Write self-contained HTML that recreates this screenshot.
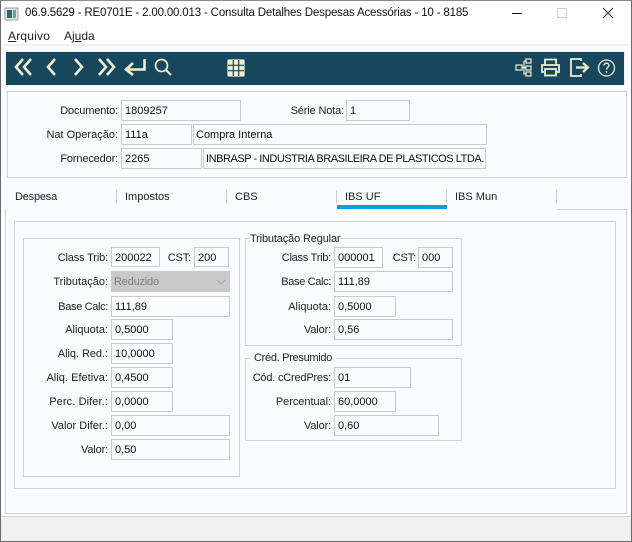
<!DOCTYPE html>
<html><head><meta charset="utf-8">
<style>
html,body{margin:0;padding:0}
body{width:632px;height:542px;overflow:hidden;position:relative;background:#fafbfd;font-family:"Liberation Sans",sans-serif;font-size:11px;color:#111}
div,span.a{position:absolute;box-sizing:border-box}
.f{border:1px solid #cbcbcb;background:#fbfcfd;line-height:21px;padding-left:3px;white-space:nowrap;height:21px;color:#111}
.l{text-align:right;line-height:22px;height:21px;white-space:nowrap;color:#222;letter-spacing:-.15px}
.l1{left:9px;width:109px}
.l2{left:10px;width:98px}
.l3{left:247px;width:84px}
.b{border:1px solid #d2d2d2}
.t{white-space:nowrap;line-height:14px;color:#222}
.s{width:1px;height:13px;top:190px;background:#cfcfcf}
</style></head><body>
<!-- title bar -->
<div style="left:0;top:0;width:632px;height:45px;background:#fff"></div>
<div style="left:0;top:44px;width:632px;height:2px;background:#f0f0f0"></div>
<svg style="position:absolute;left:4px;top:6px" width="16" height="16"><rect x="1" y="2" width="13" height="12" fill="#dfe5e6" stroke="#9aa4a8"/><rect x="3" y="4" width="5" height="8" fill="#2d6c66"/><rect x="9" y="4" width="3" height="8" fill="#7f97a4"/></svg>
<div class="t" style="left:25px;top:6px;font-size:11.5px;color:#111;letter-spacing:-.17px">06.9.5629 - RE0701E - 2.00.00.013 - Consulta Detalhes Despesas Acessórias - 10 - 8185</div>
<div style="left:512px;top:13px;width:10px;height:1px;background:#111"></div>
<div style="left:557px;top:8px;width:10px;height:10px;border:1px solid #ccc"></div>
<svg style="position:absolute;left:602px;top:7px" width="12" height="12"><path d="M1 1L11 11M11 1L1 11" stroke="#222" stroke-width="1" fill="none"/></svg>
<div class="t" style="left:8px;top:29px;font-size:12px;letter-spacing:.2px"><u>A</u>rquivo</div>
<div class="t" style="left:64px;top:29px;font-size:12px"><span>Aj</span><u>u</u>da</div>
<!-- toolbar -->
<div style="left:5px;top:51px;width:620px;height:35px;background:#eef1f5"></div>
<div style="left:6px;top:52px;width:618px;height:33px;background:#17475c"></div>
<svg style="position:absolute;left:0;top:50px" width="632" height="36" fill="none" stroke="#f1edcf" stroke-width="2.6">
<path d="M23 9L16 17L23 25M31 9L24 17L31 25"/>
<path d="M55 9L48 17L55 25"/>
<path d="M75 9L82 17L75 25"/>
<path d="M99 9L106 17L99 25M107 9L114 17L107 25"/>
<path d="M144.500 9V19.500H127M133 13L126 19.500L133 25" stroke-width="2.600"/>
<circle cx="161.500" cy="15.500" r="6" stroke-width="1.700"/><path d="M166 20L171 25" stroke-width="2"/>
<g stroke-width="1.300"><rect x="228" y="10" width="16" height="16" rx="1" fill="#f1edcf" stroke="#f1edcf"/></g>
<path d="M233.300 10V26M238.700 10V26M228 15.300H244M228 20.700H244" stroke="#17475c" stroke-width="1.200"/>
<g stroke-width="1.200"><rect x="516" y="15" width="6" height="5"/><rect x="526" y="9" width="5" height="4"/><rect x="526" y="16" width="5" height="4"/><rect x="526" y="22" width="5" height="4"/><path d="M522 17.500H526M524 11V24H526M524 11H526"/></g>
<g stroke-width="1.800"><path d="M545 15V9.500H556V15"/><path d="M545 22H542V15H559V22H556"/><rect x="545" y="19" width="11" height="6.500"/></g>
<g stroke-width="1.800"><path d="M581 11V9H571V26H581V24"/><path d="M576 17.500H587M583 13L588 17.500L583 22" stroke-width="2.200"/></g>
<circle cx="606.500" cy="18" r="8" stroke-width="1.300"/><path d="M604 15.500C604 12.500 609 12.500 609 15.500C609 17.300 606.500 17.300 606.500 19.500M606.500 21V23" stroke-width="1.400"/>
</svg>
<!-- header panel -->
<div class="b" style="left:7px;top:91px;width:620px;height:87px"></div>
<div class="l l1" style="top:100px">Documento:</div><div class="f" style="left:121px;top:100px;width:120px">1809257</div>
<div class="l" style="left:250px;width:94px;top:100px">Série Nota:</div><div class="f" style="left:346px;top:100px;width:64px">1</div>
<div class="l l1" style="top:124px;letter-spacing:0">Nat Operação:</div><div class="f" style="left:121px;top:124px;width:71px">111a</div><div class="f" style="left:193px;top:124px;width:294px;padding-left:2px">Compra Interna</div>
<div class="l l1" style="top:148px">Fornecedor:</div><div class="f" style="left:121px;top:148px;width:81px">2265</div><div class="f" style="left:203px;top:148px;width:283px;padding-left:2px;letter-spacing:-.46px">INBRASP - INDUSTRIA BRASILEIRA DE PLASTICOS LTDA.</div>
<!-- tabs -->
<div class="t" style="left:15px;top:190px;letter-spacing:-.2px">Despesa</div>
<div class="t" style="left:125px;top:190px">Impostos</div>
<div class="t" style="left:235px;top:190px">CBS</div>
<div class="t" style="left:345px;top:190px">IBS UF</div>
<div class="t" style="left:455px;top:190px">IBS Mun</div>
<div class="s" style="left:116px"></div><div class="s" style="left:226px"></div><div class="s" style="left:336px"></div><div class="s" style="left:446px"></div><div class="s" style="left:556px"></div>
<div style="left:337px;top:205px;width:110px;height:4px;background:#00a0e6"></div>
<div class="b" style="left:5px;top:209px;width:622px;height:305px;border-top-color:transparent"></div>
<div style="left:557px;top:209px;width:70px;height:1px;background:#d2d2d2"></div>
<div class="b" style="left:14px;top:221px;width:602px;height:268px"></div>
<!-- left group -->
<div class="b" style="left:23px;top:238px;width:217px;height:239px"></div>
<div class="l l2" style="top:247px">Class Trib:</div><div class="f" style="left:111px;top:247px;width:49px;height:20px;line-height:20px">200022</div>
<div class="l" style="left:160px;width:31px;top:247px">CST:</div><div class="f" style="left:194px;top:247px;width:35px;height:20px;line-height:20px">200</div>
<div class="l l2" style="top:271px;letter-spacing:0">Tributação:</div>
<div style="left:111px;top:271px;width:119px;height:21px;background:#c9c9c9;color:#7d7d7d;line-height:22px;padding-left:3px;letter-spacing:-.2px">Reduzido</div>
<svg style="position:absolute;left:216px;top:279px" width="10" height="7"><path d="M1 1L5 5L9 1" fill="none" stroke="#a6a6a6"/></svg>
<div class="l l2" style="top:296px;letter-spacing:-.35px">Base Calc:</div><div class="f" style="left:111px;top:296px;width:119px">111,89</div>
<div class="l l2" style="top:319px;letter-spacing:0">Aliquota:</div><div class="f" style="left:111px;top:319px;width:62px">0,5000</div>
<div class="l l2" style="top:343px;letter-spacing:-.05px">Aliq. Red.:</div><div class="f" style="left:111px;top:343px;width:62px">10,0000</div>
<div class="l l2" style="top:367px;letter-spacing:.03px">Aliq. Efetiva:</div><div class="f" style="left:111px;top:367px;width:62px">0,4500</div>
<div class="l l2" style="top:391px;letter-spacing:.1px">Perc. Difer.:</div><div class="f" style="left:111px;top:391px;width:62px">0,0000</div>
<div class="l l2" style="top:415px;letter-spacing:0">Valor Difer.:</div><div class="f" style="left:111px;top:415px;width:119px">0,00</div>
<div class="l l2" style="top:439px">Valor:</div><div class="f" style="left:111px;top:439px;width:119px">0,50</div>
<!-- right group 1 -->
<div class="b" style="left:245px;top:238px;width:217px;height:108px"></div>
<div class="t" style="left:249px;top:232px;background:#fafbfd;padding:0 1px;letter-spacing:-.15px">Tributação Regular</div>
<div class="l l3" style="top:247px;letter-spacing:-.25px">Class Trib:</div><div class="f" style="left:334px;top:247px;width:49px">000001</div>
<div class="l" style="left:383px;width:33px;top:247px">CST:</div><div class="f" style="left:418px;top:247px;width:35px">000</div>
<div class="l l3" style="top:271px;letter-spacing:-.35px">Base Calc:</div><div class="f" style="left:334px;top:271px;width:119px">111,89</div>
<div class="l l3" style="top:296px;letter-spacing:0">Aliquota:</div><div class="f" style="left:334px;top:296px;width:62px">0,5000</div>
<div class="l l3" style="top:319px">Valor:</div><div class="f" style="left:334px;top:319px;width:119px">0,56</div>
<!-- right group 2 -->
<div class="b" style="left:245px;top:358px;width:217px;height:83px"></div>
<div class="t" style="left:250px;top:351px;background:#fafbfd;padding:0 4px;letter-spacing:-.3px">Créd. Presumido</div>
<div class="l l3" style="top:367px;letter-spacing:-.2px">Cód. cCredPres:</div><div class="f" style="left:334px;top:367px;width:77px">01</div>
<div class="l l3" style="top:391px;letter-spacing:-.05px">Percentual:</div><div class="f" style="left:334px;top:391px;width:62px">60,0000</div>
<div class="l l3" style="top:415px">Valor:</div><div class="f" style="left:334px;top:415px;width:105px">0,60</div>
<!-- status -->
<div style="left:0;top:516px;width:632px;height:26px;background:#f0f0f0;border-top:1px solid #d6d6d6"></div>
<!-- window frame -->
<div style="left:0;top:0;width:632px;height:542px;border:1px solid #6a6a6a;border-top-color:#8a8a8a"></div>
</body></html>
